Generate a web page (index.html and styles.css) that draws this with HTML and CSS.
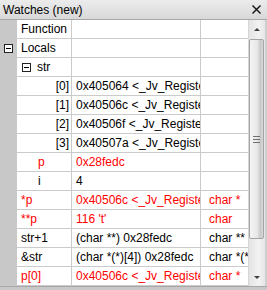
FILE: index.html
```html
<!DOCTYPE html>
<html lang="en">
<head>
    <meta charset="UTF-8">
    <title>Watches (new)</title>
    <link rel="stylesheet" href="styles.css">
</head>
<body>
    <div class="window">
        <div class="titlebar">
            <span class="title">Watches (new)</span>
            <svg class="close" width="9" height="9" viewBox="0 0 9 9">
                <path d="M0.5 0.5 L8.5 8.5 M8.5 0.5 L0.5 8.5" stroke="#111" stroke-width="1.4" fill="none"/>
            </svg>
        </div>

        <div class="content">
            <div class="grid">
                <div class="row">
                    <div class="gutter"></div>
                    <div class="cell name">Function</div>
                    <div class="cell value"></div>
                    <div class="cell type"></div>
                </div>
                <div class="row">
                    <div class="gutter"><span class="toggle"><span class="minus"></span></span></div>
                    <div class="cell name">Locals</div>
                    <div class="cell value"></div>
                    <div class="cell type"></div>
                </div>
                <div class="row">
                    <div class="gutter"></div>
                    <div class="cell name tree"><span class="toggle"><span class="minus"></span></span>str</div>
                    <div class="cell value"></div>
                    <div class="cell type"></div>
                </div>
                <div class="row">
                    <div class="gutter"></div>
                    <div class="cell name item">[0]</div>
                    <div class="cell value">0x405064 &lt;_Jv_RegisterClasses+4&gt;</div>
                    <div class="cell type"></div>
                </div>
                <div class="row">
                    <div class="gutter"></div>
                    <div class="cell name item">[1]</div>
                    <div class="cell value">0x40506c &lt;_Jv_RegisterClasses+12&gt;</div>
                    <div class="cell type"></div>
                </div>
                <div class="row">
                    <div class="gutter"></div>
                    <div class="cell name item">[2]</div>
                    <div class="cell value">0x40506f &lt;_Jv_RegisterClasses+15&gt;</div>
                    <div class="cell type"></div>
                </div>
                <div class="row">
                    <div class="gutter"></div>
                    <div class="cell name item">[3]</div>
                    <div class="cell value">0x40507a &lt;_Jv_RegisterClasses+26&gt;</div>
                    <div class="cell type"></div>
                </div>
                <div class="row changed">
                    <div class="gutter"></div>
                    <div class="cell name local">p</div>
                    <div class="cell value">0x28fedc</div>
                    <div class="cell type"></div>
                </div>
                <div class="row">
                    <div class="gutter"></div>
                    <div class="cell name local">i</div>
                    <div class="cell value">4</div>
                    <div class="cell type"></div>
                </div>
                <div class="row changed">
                    <div class="gutter"></div>
                    <div class="cell name">*p</div>
                    <div class="cell value">0x40506c &lt;_Jv_RegisterClasses+12&gt;</div>
                    <div class="cell type">char *</div>
                </div>
                <div class="row changed">
                    <div class="gutter"></div>
                    <div class="cell name">**p</div>
                    <div class="cell value">116 't'</div>
                    <div class="cell type">char</div>
                </div>
                <div class="row">
                    <div class="gutter"></div>
                    <div class="cell name">str+1</div>
                    <div class="cell value">(char **) 0x28fedc</div>
                    <div class="cell type">char **</div>
                </div>
                <div class="row">
                    <div class="gutter"></div>
                    <div class="cell name">&amp;str</div>
                    <div class="cell value">(char *(*)[4]) 0x28fedc</div>
                    <div class="cell type">char *(*)[4]</div>
                </div>
                <div class="row changed">
                    <div class="gutter"></div>
                    <div class="cell name">p[0]</div>
                    <div class="cell value">0x40506c &lt;_Jv_RegisterClasses+12&gt;</div>
                    <div class="cell type">char *</div>
                </div>
            </div>

            <!-- vertical scrollbar -->
            <div class="vscroll">
                <div class="arrow"><span class="tri up"></span></div>
                <div class="thumb">
                    <span class="grip"></span>
                    <span class="grip"></span>
                    <span class="grip"></span>
                </div>
                <div class="track"></div>
                <div class="arrow"><span class="tri down"></span></div>
            </div>
        </div>
        <div class="bottom"></div>
    </div>
</body>
</html>
```

FILE: styles.css
```css
body {
    margin: 0;
    background-color: #fff;
    font-family: "Liberation Sans", Arial, sans-serif;
    font-size: 12px;
    color: #000;
}
.window {
    width: 267px;
    height: 290px;
    display: flex;
    flex-direction: column;
    overflow: hidden;
}
.titlebar {
    height: 19px;
    flex: none;
    display: flex;
    align-items: center;
    justify-content: space-between;
    padding: 0 6px 0 3px;
    background: linear-gradient(#ececec, #d8d8d8);
    border-bottom: 1px solid #a8a8a8;
}
.title {
    line-height: 19px;
    margin-top: 1px;
}
.close {
    margin-bottom: 1px;
}
.content {
    display: flex;
    height: 266px;
    flex: none;
    border-right: 2px solid #cfcfcf;
}
.grid {
    width: 248px;
    flex: none;
}
.row {
    display: grid;
    grid-template-columns: 17px 55px 129px 47px;
    height: 19px;
}
.gutter {
    background-color: #c8c8c8;
    display: flex;
    align-items: center;
    padding-left: 4px;
}
.cell {
    line-height: 18px;
    border-bottom: 1px solid #cbcbcb;
    border-right: 1px solid #cbcbcb;
    white-space: nowrap;
    overflow: hidden;
    padding-left: 4px;
}
.cell.type {
    border-right: none;
    padding-left: 8px;
}
.cell.value {
    padding-left: 4px;
}
.name.item {
    text-align: right;
    padding-right: 2px;
}
.name.local {
    padding-left: 21px;
}
.name.tree {
    display: flex;
    align-items: center;
    padding-left: 5px;
}
.name.tree .toggle {
    margin-right: 6px;
}
.changed .cell {
    color: #ff0000;
}
.toggle {
    width: 9px;
    height: 9px;
    box-sizing: border-box;
    border: 1px solid #222;
    display: flex;
    align-items: center;
    justify-content: center;
    background-color: #fff;
}
.minus {
    width: 5px;
    height: 1px;
    background-color: #000;
}
/* scrollbar */
.vscroll {
    width: 17px;
    flex: none;
    display: flex;
    flex-direction: column;
    background: linear-gradient(90deg, #e4e4e4, #f2f2f2 60%, #e6e6e6);
    border-left: 1px solid #d6d6d6;
    box-sizing: border-box;
}
.arrow {
    height: 18px;
    flex: none;
    display: flex;
    align-items: center;
    justify-content: center;
}
.tri {
    width: 0;
    height: 0;
    border-left: 3px solid transparent;
    border-right: 3px solid transparent;
}
.tri.up {
    border-bottom: 3px solid #404040;
}
.tri.down {
    border-top: 3px solid #404040;
}
.thumb {
    height: 200px;
    flex: none;
    margin: 1px 1px 0 0;
    border: 1px solid #a4a4a4;
    border-radius: 2px;
    box-sizing: border-box;
    background: linear-gradient(90deg, #f4f4f4, #e8e8e8 55%, #c8c8c8 80%, #d8d8d8);
    display: flex;
    flex-direction: column;
    align-items: center;
    justify-content: center;
    gap: 2px;
}
.grip {
    width: 7px;
    height: 1px;
    background-color: #707070;
}
.track {
    flex: 1;
}
.bottom {
    flex: 1;
    background-color: #c8c8c8;
    border-top: 1px solid #a8a8a8;
}
```
